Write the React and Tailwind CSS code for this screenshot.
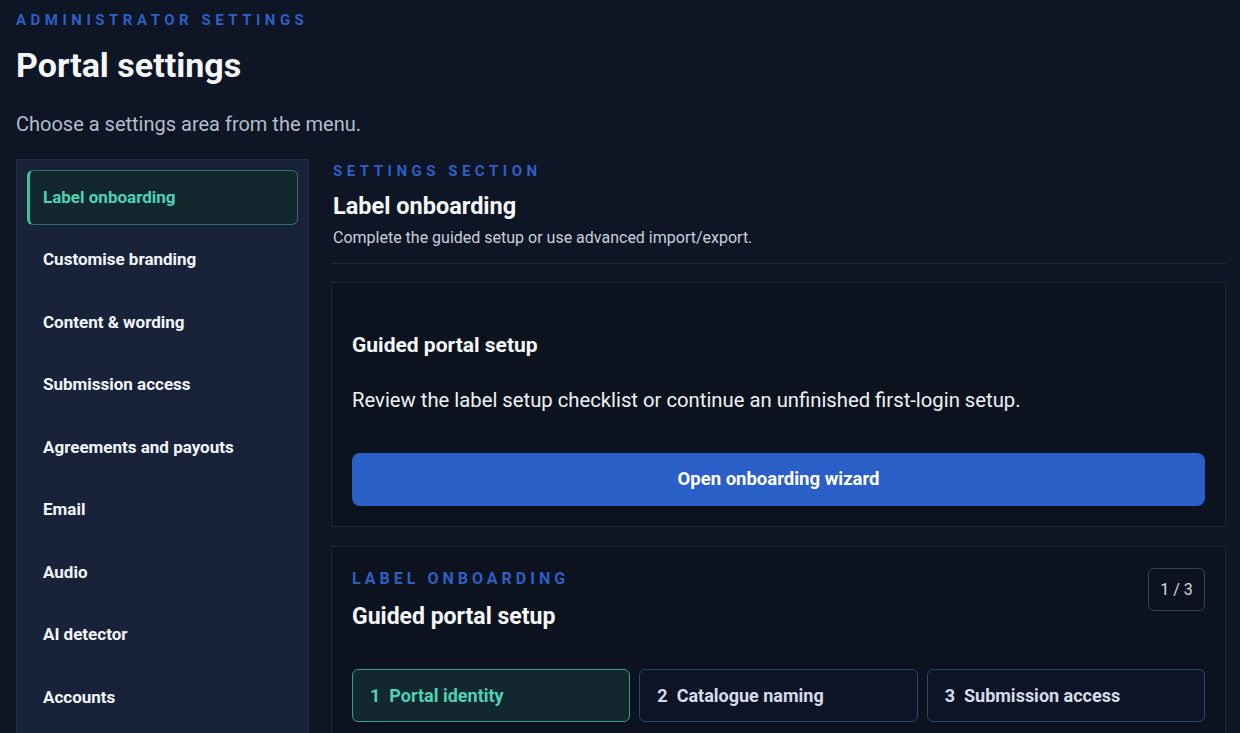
import React, { useState } from "react";

const menuItems = [
  "Label onboarding",
  "Customise branding",
  "Content & wording",
  "Submission access",
  "Agreements and payouts",
  "Email",
  "Audio",
  "AI detector",
  "Accounts",
];

const steps = ["Portal identity", "Catalogue naming", "Submission access"];

const SideMenu = ({ active, onSelect }) => {
  return (
    <nav className="w-[293px] shrink-0 bg-[#18233a] border border-[#1f2a42] p-[10px] flex flex-col gap-[7.5px]">
      {menuItems.map((item) => {
        const isActive = item === active;
        return (
          <button
            key={item}
            onClick={() => onSelect(item)}
            className={
              isActive
                ? "h-[55px] text-left pl-[13px] rounded-md border border-[#2f6f6a] border-l-[3px] border-l-[#3cc3a6] bg-[#13272f] text-[#4fd1b5] text-[17px] font-bold"
                : "h-[55px] text-left pl-[13px] rounded-md border border-transparent border-l-[3px] text-[#f2f5f9] text-[17px] font-bold"
            }
          >
            {item}
          </button>
        );
      })}
    </nav>
  );
};

const StepTabs = ({ current }) => {
  return (
    <div className="grid grid-cols-3 gap-[9px] mt-[38px]">
      {steps.map((label, i) => {
        const isCurrent = i === current;
        return (
          <div
            key={label}
            className={
              isCurrent
                ? "h-[53px] flex items-center px-[17px] rounded-md border border-[#3a9c8a] bg-[#13272e] text-[#4fd1b5] text-[18px] font-bold"
                : "h-[53px] flex items-center px-[17px] rounded-md border border-[#27447a] bg-[#0d1426] text-[#d6dce7] text-[18px] font-bold"
            }
          >
            <span>{i + 1}</span>
            <span className="ml-[9px]">{label}</span>
          </div>
        );
      })}
    </div>
  );
};

export default function App() {
  const [active, setActive] = useState("Label onboarding");

  return (
    <div className="min-h-screen bg-[#0e1524] pl-4 pr-[14px] pt-[10px] font-['Roboto',sans-serif]">
      <p className="text-[15px] leading-[20px] font-bold tracking-[0.3em] text-[#2d5fc5]">
        ADMINISTRATOR SETTINGS
      </p>
      <h1 className="mt-[15px] text-[34px] leading-[40px] font-bold text-[#f5f7fa]">
        Portal settings
      </h1>
      <p className="mt-[25px] text-[20px] leading-[28px] text-[#b4bdcb]">
        Choose a settings area from the menu.
      </p>

      <div className="mt-[21px] flex items-start">
        <SideMenu active={active} onSelect={setActive} />

        <main className="flex-1 ml-[22px]">
          <header className="pl-[2px] pt-[2px] pb-[15px] border-b border-[#1e2636]">
            <p className="text-[15px] leading-[20px] font-bold tracking-[0.3em] text-[#2d5fc5]">
              SETTINGS SECTION
            </p>
            <h2 className="mt-[11px] text-[23.5px] leading-[28px] font-bold text-[#f5f7fa]">
              {active}
            </h2>
            <p className="mt-[8px] text-[16px] leading-[20px] text-[#c8cfdb]">
              Complete the guided setup or use advanced import/export.
            </p>
          </header>

          <section className="mt-[18px] border border-[#1c2535] bg-[#0c131f] px-5 pt-[48px] pb-5">
            <h3 className="text-[21px] leading-[28px] font-bold text-[#f5f7fa]">
              Guided portal setup
            </h3>
            <p className="mt-[27px] text-[20.25px] leading-[28px] text-[#eef1f6]">
              Review the label setup checklist or continue an unfinished first-login setup.
            </p>
            <button className="mt-[39px] w-full h-[53px] rounded-lg bg-[#2b5fc8] text-white text-[18.5px] font-bold">
              Open onboarding wizard
            </button>
          </section>

          <section className="mt-[19px] border border-[#1c2535] bg-[#0c131f] px-5 pt-[21px] pb-5">
            <div className="flex items-start justify-between">
              <div>
                <p className="pt-[1px] text-[16px] leading-[20px] font-bold tracking-[0.25em] text-[#2d5fc5]">
                  LABEL ONBOARDING
                </p>
                <h3 className="mt-[14px] text-[23px] leading-[28px] font-bold text-[#f5f7fa]">
                  Guided portal setup
                </h3>
              </div>
              <span className="w-[57px] h-[43px] flex items-center justify-center rounded-md border border-[#394152] text-[16px] text-[#d3d9e3]">
                1 / 3
              </span>
            </div>
            <StepTabs current={0} />
          </section>
        </main>
      </div>
    </div>
  );
}
